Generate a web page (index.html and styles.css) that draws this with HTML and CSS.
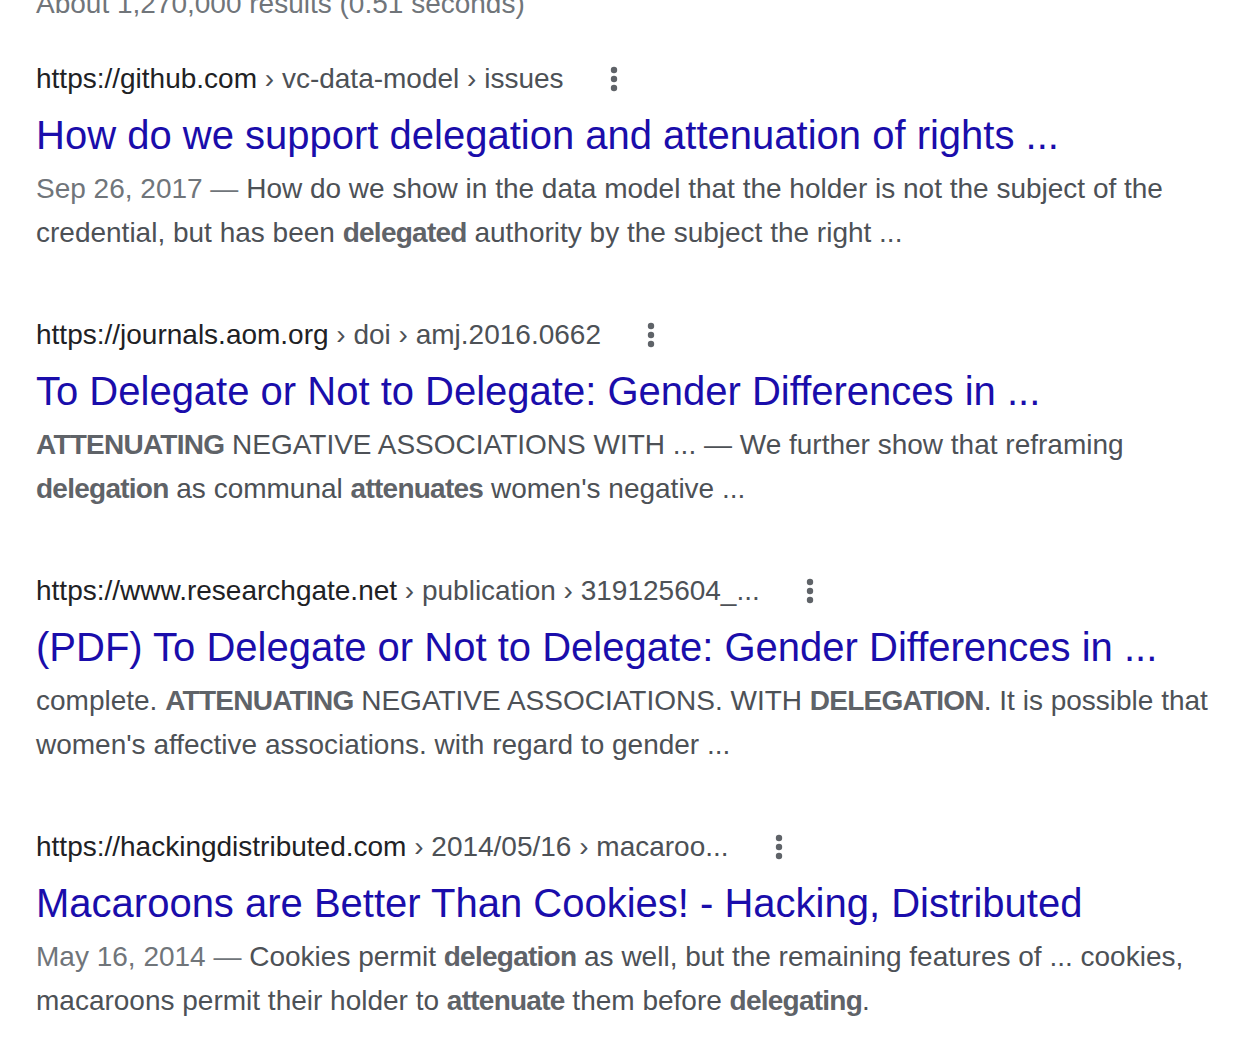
FILE: index.html
```html
<!DOCTYPE html>
<html>

<head>
    <meta charset="UTF-8">
    <meta name="viewport" content="width=device-width, initial-scale=1.0">
    <title>delegation attenuation - Search</title>
    <link rel="stylesheet" href="styles.css">
</head>

<body>
    <div class="results">
        <div class="stats">About 1,270,000 results (0.51 seconds)</div>

        <div class="result">
            <div class="url-row">
                <cite class="url">https://github.com<span class="crumbs"> › vc-data-model › issues</span></cite>
                <span class="more">
                    <svg width="8" height="26" viewBox="0 0 8 26"><circle cx="4" cy="4" r="3.2"/><circle cx="4" cy="13" r="3.2"/><circle cx="4" cy="22" r="3.2"/></svg>
                </span>
            </div>
            <h3 class="title">How do we support delegation and attenuation of rights ...</h3>
            <div class="snippet"><span class="date">Sep 26, 2017 — </span>How do we show in the data model that the holder is not the subject of the credential, but has been <b>delegated</b> authority by the subject the right ...</div>
        </div>

        <div class="result">
            <div class="url-row">
                <cite class="url">https://journals.aom.org<span class="crumbs"> › doi › amj.2016.0662</span></cite>
                <span class="more">
                    <svg width="8" height="26" viewBox="0 0 8 26"><circle cx="4" cy="4" r="3.2"/><circle cx="4" cy="13" r="3.2"/><circle cx="4" cy="22" r="3.2"/></svg>
                </span>
            </div>
            <h3 class="title">To Delegate or Not to Delegate: Gender Differences in ...</h3>
            <div class="snippet"><b>ATTENUATING</b> NEGATIVE ASSOCIATIONS WITH ... — We further show that reframing <b>delegation</b> as communal <b>attenuates</b> women's negative ...</div>
        </div>

        <div class="result">
            <div class="url-row">
                <cite class="url">https://www.researchgate.net<span class="crumbs"> › publication › 319125604_...</span></cite>
                <span class="more">
                    <svg width="8" height="26" viewBox="0 0 8 26"><circle cx="4" cy="4" r="3.2"/><circle cx="4" cy="13" r="3.2"/><circle cx="4" cy="22" r="3.2"/></svg>
                </span>
            </div>
            <h3 class="title">(PDF) To Delegate or Not to Delegate: Gender Differences in ...</h3>
            <div class="snippet">complete. <b>ATTENUATING</b> NEGATIVE ASSOCIATIONS. WITH <b>DELEGATION</b>. It is possible that women's affective associations. with regard to gender ...</div>
        </div>

        <div class="result">
            <div class="url-row">
                <cite class="url">https://hackingdistributed.com<span class="crumbs"> › 2014/05/16 › macaroo...</span></cite>
                <span class="more">
                    <svg width="8" height="26" viewBox="0 0 8 26"><circle cx="4" cy="4" r="3.2"/><circle cx="4" cy="13" r="3.2"/><circle cx="4" cy="22" r="3.2"/></svg>
                </span>
            </div>
            <h3 class="title">Macaroons are Better Than Cookies! - Hacking, Distributed</h3>
            <div class="snippet"><span class="date">May 16, 2014 — </span>Cookies permit <b>delegation</b> as well, but the remaining features of ... cookies, macaroons permit their holder to <b>attenuate</b> them before <b>delegating</b>.</div>
        </div>
    </div>
</body>

</html>
```

FILE: styles.css
```css
body {
    margin: 0;
    background-color: #fff;
    font-family: 'Liberation Sans', Arial, sans-serif;
    color: #4d5156;
}

.results {
    width: 1180px;
    padding-left: 36px;
}

.stats {
    margin-top: -14px;
    font-size: 28px;
    line-height: 36px;
    color: #70757a;
    margin-bottom: 39px;
}

.result {
    margin-bottom: 62px;
}

.url-row {
    display: flex;
    align-items: center;
    height: 36px;
}

.url {
    font-style: normal;
    font-size: 28px;
    line-height: 36px;
    color: #202124;
    white-space: nowrap;
}

.crumbs {
    color: #4d5156;
}

.more {
    display: flex;
    margin-left: 46px;
}

.more svg {
    fill: #5f6368;
}

.title {
    margin: 12px 0 6px 0;
    font-size: 40px;
    line-height: 52px;
    font-weight: normal;
    color: #1a0dab;
    white-space: nowrap;
}

.snippet {
    font-size: 28px;
    line-height: 44px;
    color: #4d5156;
}

/* bold words in the reference are a touch narrower */
.snippet b {
    color: #5f6368;
    letter-spacing: -0.75px;
}

.date {
    color: #70757a;
}
```
